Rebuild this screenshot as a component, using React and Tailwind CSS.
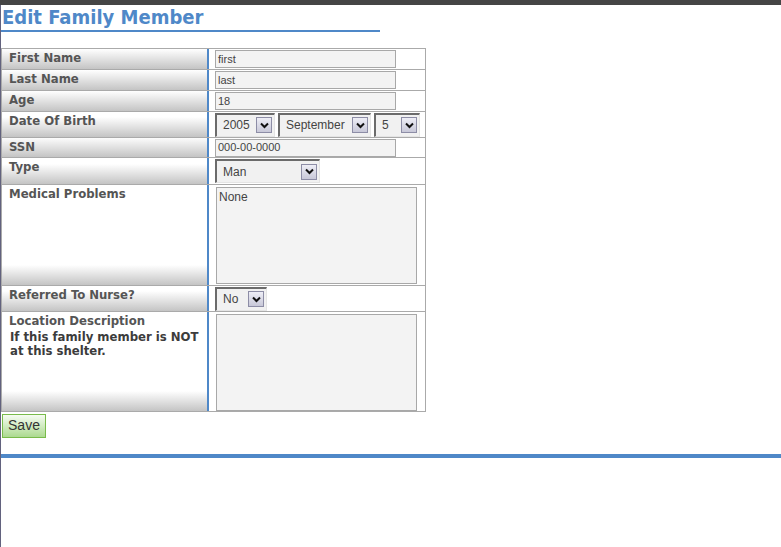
import React from "react";

const labelFont = "font-['DejaVu_Sans_Condensed','DejaVu_Sans',sans-serif]";
const arial = "font-['Liberation_Sans',Arial,sans-serif]";

function Chevron() {
  return (
    <svg width="9" height="7" viewBox="0 0 9 7">
      <path d="M1 1.5 L4.5 5 L8 1.5" fill="none" stroke="#111" strokeWidth="2" />
    </svg>
  );
}

function Select({ w, value }) {
  return (
    <div
      className={`${w} h-[24px] flex items-center justify-between border-t-2 border-l-2 border-r border-b border-t-[#6b6b6b] border-l-[#6b6b6b] border-r-[#e4e4e4] border-b-[#e4e4e4] bg-[#f1f1f1] pl-[6px] pr-[2px]`}
    >
      <span className={`text-[12px] leading-[14px] text-[#444] ${arial}`}>{value}</span>
      <span className="w-[16px] h-[16px] border border-[#8d8da6] bg-[linear-gradient(#eeeef6,#c8c8d8)] flex items-center justify-center">
        <Chevron />
      </span>
    </div>
  );
}

function Input({ value }) {
  return (
    <div
      className={`w-[181px] h-[18px] border border-[#a8a8a8] bg-[#f3f3f3] px-[2px] flex items-center text-[11px] text-[#444] ${arial}`}
    >
      {value}
    </div>
  );
}

function TextArea({ value }) {
  return (
    <div
      className={`w-[201px] h-[97px] mt-[2px] border border-[#a8a8a8] bg-[#f3f3f3] px-[2px] pt-[2px] text-[12px] leading-[14px] text-[#444] ${arial}`}
    >
      {value}
    </div>
  );
}

function Row({ h, label, children, align, last }) {
  return (
    <div className={`flex ${h} ${last ? "" : "border-b border-[#aaaaaa]"}`}>
      <div
        className={`w-[207px] shrink-0 border-r-2 border-[#4f88c8] bg-[linear-gradient(180deg,#ffffff_calc(100%_-_20px),#c4c4c4_100%)] pl-[7px] pt-[1px] ${labelFont} font-bold text-[13px] leading-[15px] text-[#555555]`}
      >
        {label}
      </div>
      <div className={`flex-1 flex ${align}`}>{children}</div>
    </div>
  );
}

export default function App() {
  return (
    <div className="w-[781px] min-h-[547px] bg-white">
      <div className="h-[5px] bg-[#454545]" />
      <div className="border-l border-[#62627e] min-h-[542px]">
        <div className={`w-[379px] h-[27px] border-b-2 border-[#4f88c8] pl-[1px] ${labelFont} font-bold text-[20px] leading-[25px] text-[#4f88c8]`}>
          Edit Family Member
        </div>
        <div className="mt-[16px] w-[425px] border border-[#aaaaaa]">
          <Row h="h-[21px]" label="First Name" align="items-center pl-[6px]">
            <Input value="first" />
          </Row>
          <Row h="h-[21px]" label="Last Name" align="items-center pl-[6px]">
            <Input value="last" />
          </Row>
          <Row h="h-[21px]" label="Age" align="items-center pl-[6px]">
            <Input value="18" />
          </Row>
          <Row h="h-[26px]" label="Date Of Birth" align="items-center pl-[6px] gap-[3px]">
            <Select w="w-[60px]" value="2005" />
            <Select w="w-[93px]" value="September" />
            <Select w="w-[46px]" value="5" />
          </Row>
          <Row h="h-[20px]" label="SSN" align="items-center pl-[6px]">
            <Input value="000-00-0000" />
          </Row>
          <Row h="h-[27px]" label="Type" align="items-center pl-[6px]">
            <Select w="w-[105px]" value="Man" />
          </Row>
          <Row h="h-[101px]" label="Medical Problems" align="items-start pl-[7px]">
            <TextArea value="None" />
          </Row>
          <Row h="h-[26px]" label="Referred To Nurse?" align="items-center pl-[6px]">
            <Select w="w-[52px]" value="No" />
          </Row>
          <Row
            h="h-[99px]"
            last
            label={
              <div>
                <div>Location Description</div>
                <div className="pl-[1px] pt-[2px] pr-[4px] text-[#3c3c3c] leading-[14px]">
                  If this family member is NOT at this shelter.
                </div>
              </div>
            }
            align="items-start pl-[7px]"
          >
            <TextArea value="" />
          </Row>
        </div>
        <div className="pl-[1px]">
          <button
            className={`w-[44px] h-[24px] border border-[#79bb4a] bg-[linear-gradient(#f6fcf2,#acda90)] text-[14px] text-[#333] ${arial}`}
          >
            Save
          </button>
        </div>
        <div className="mt-[16px] h-[4px] bg-[#4f88c8]" />
      </div>
    </div>
  );
}
